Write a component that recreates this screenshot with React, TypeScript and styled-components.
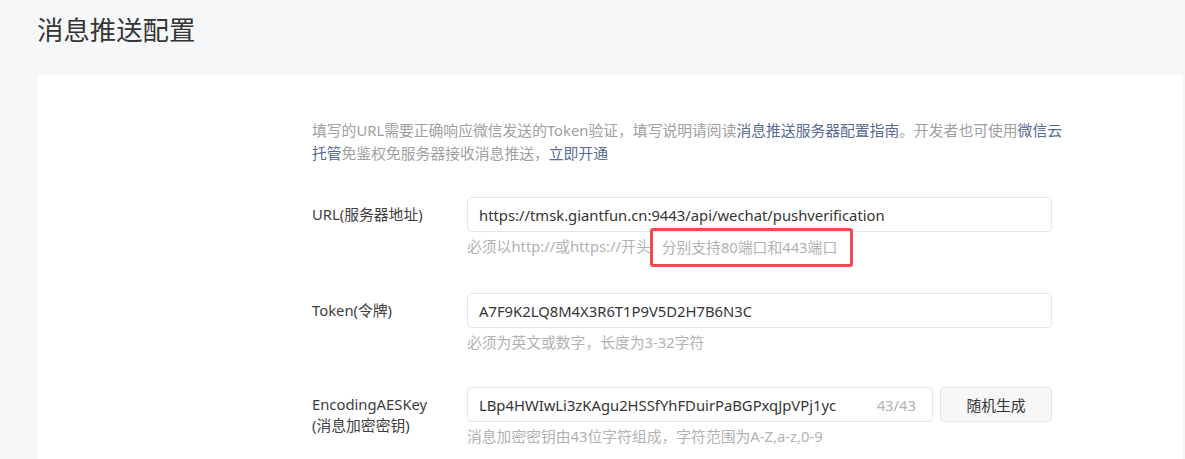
import React from "react";
import styled, { createGlobalStyle } from "styled-components";

const Global = createGlobalStyle`
  html, body { margin: 0; padding: 0; }
  body {
    background: #f6f7f9;
    font-family: "Noto Sans", "Noto Sans CJK SC", sans-serif;
    color: #353535;
    width: 1185px;
    height: 459px;
    overflow: hidden;
  }
`;

const Page = styled.div`
  padding: 11px 2px 0 37px;
`;

const Title = styled.h1`
  margin: 0 0 28px;
  font-size: 26.4px;
  font-weight: 400;
  line-height: 36px;
  color: #353535;
  font-family: "Noto Sans CJK SC", sans-serif;
`;

const Card = styled.div`
  background: #fff;
  min-height: 400px;
  padding: 44px 0 0 275px;
`;

const Desc = styled.p`
  margin: 0 0 32px;
  width: 752px;
  font-size: 14.8px;
  line-height: 23px;
  color: #a0a0a0;
`;

const Link = styled.a`
  color: #576b95;
  text-decoration: none;
`;

const Row = styled.div`
  display: grid;
  grid-template-columns: 155px 585px;
  margin-bottom: 33px;
`;

const Label = styled.div`
  padding-top: 7px;
  font-size: 14.8px;
  line-height: 21px;
  color: #3e3e3e;
`;

const Field = styled.div`
  display: block;
`;

const InputLine = styled.div`
  display: flex;
  gap: 7px;
`;

const InputBox = styled.div`
  flex: 1;
  height: 35px;
  box-sizing: border-box;
  border: 1px solid #e7e7eb;
  border-radius: 4px;
  background: #fff;
  display: flex;
  align-items: center;
  justify-content: space-between;
  padding: 0 16px 0 11px;
  font-size: 14.8px;
  color: #353535;
`;

const Counter = styled.span`
  color: #b2b2b2;
`;

const Button = styled.div`
  width: 112px;
  height: 35px;
  box-sizing: border-box;
  border: 1px solid #e4e6e9;
  border-radius: 4px;
  background: #f7f7f7;
  display: flex;
  align-items: center;
  justify-content: center;
  font-size: 14.8px;
  color: #353535;
`;

const Hint = styled.div`
  margin-top: 3px;
  font-size: 14.8px;
  line-height: 23px;
  color: #b2b2b2;
  white-space: nowrap;
`;

const Mark = styled.span`
  display: inline-block;
  margin: -7px 0 -7px -1px;
  padding: 5px 13px 5px 9px;
  border: 3px solid #f5484a;
  border-radius: 3px;
  vertical-align: top;
`;

export default function App() {
  return (
    <>
      <Global />
      <Page>
        <Title>消息推送配置</Title>
        <Card>
          <Desc>
            填写的URL需要正确响应微信发送的Token验证，填写说明请阅读
            <Link>消息推送服务器配置指南</Link>。开发者也可使用
            <Link>微信云托管</Link>免鉴权免服务器接收消息推送，<Link>立即开通</Link>
          </Desc>
          <Row>
            <Label>URL(服务器地址)</Label>
            <Field>
              <InputBox>https://tmsk.giantfun.cn:9443/api/wechat/pushverification</InputBox>
              <Hint>
                必须以http://或https://开头<Mark>分别支持80端口和443端口</Mark>
              </Hint>
            </Field>
          </Row>
          <Row>
            <Label>Token(令牌)</Label>
            <Field>
              <InputBox>A7F9K2LQ8M4X3R6T1P9V5D2H7B6N3C</InputBox>
              <Hint>必须为英文或数字，长度为3-32字符</Hint>
            </Field>
          </Row>
          <Row>
            <Label>
              EncodingAESKey
              <br />
              (消息加密密钥)
            </Label>
            <Field>
              <InputLine>
                <InputBox>
                  <span>LBp4HWIwLi3zKAgu2HSSfYhFDuirPaBGPxqJpVPj1yc</span>
                  <Counter>43/43</Counter>
                </InputBox>
                <Button>随机生成</Button>
              </InputLine>
              <Hint>消息加密密钥由43位字符组成，字符范围为A-Z,a-z,0-9</Hint>
            </Field>
          </Row>
        </Card>
      </Page>
    </>
  );
}
